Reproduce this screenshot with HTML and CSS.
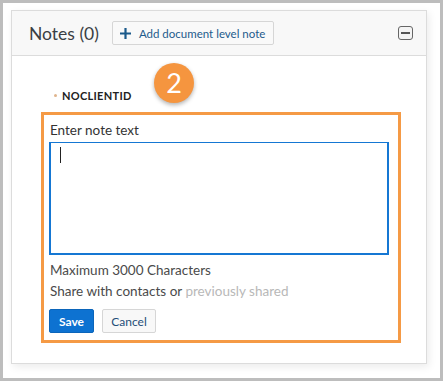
FILE: index.html
```
<!DOCTYPE html>
<html lang="en">
<head>
    <meta charset="UTF-8">
    <title>Notes</title>
    <link rel="stylesheet" href="styles.css">
</head>
<body>
    <div class="frame">
        <section class="notes">
            <header class="notes_header">
                <h2 class="notes_title">Notes (0)</h2>
                <button class="add_btn" type="button">
                    <svg width="11" height="11" viewBox="0 0 11 11"><path d="M5.5 0v11M0 5.5h11" stroke="#1b5a8b" stroke-width="2.2"/></svg>
                    <span>Add document level note</span>
                </button>
                <button class="collapse_btn" type="button" aria-label="collapse"></button>
            </header>

            <div class="notes_body">
                <ul class="clients">
                    <li>NOCLIENTID</li>
                </ul>
                <span class="step">2</span>

                <div class="note_form">
                    <label class="note_label">Enter note text</label>
                    <div class="note_text"><span class="caret"></span></div>
                    <p class="note_info">Maximum 3000 Characters</p>
                    <p class="note_info">Share with contacts or <span class="muted">previously shared</span></p>
                    <div class="note_actions">
                        <button class="btn btn_save" type="button">Save</button>
                        <button class="btn btn_cancel" type="button">Cancel</button>
                    </div>
                </div>
            </div>
        </section>
    </div>
</body>
</html>
```

FILE: styles.css
```
* {
    padding: 0;
    margin: 0;
    box-sizing: border-box;
    font-family: Lato, 'Open Sans', sans-serif;
}
ul {
    list-style-type: none;
}
body {
    background: #fff;
}
.frame {
    width: 443px;
    height: 381px;
    padding: 7px 13px 0 8px;
    border: 3px solid #bdbdbd;
}
.notes {
    height: 354px;
    border: 1px solid #dcdcdc;
    background: #fff;
    box-shadow: 2px 3px 8px rgba(0, 0, 0, 0.08);
}
.notes_header {
    display: flex;
    align-items: center;
    height: 45px;
    padding: 0 13px 0 17px;
    border-bottom: 1px solid #dcdcdc;
    background: #f8f8f8;
}
.notes_title {
    font-size: 17.5px;
    font-weight: normal;
    color: #3a3f44;
}
.add_btn {
    display: flex;
    align-items: center;
    gap: 8px;
    height: 24px;
    margin-left: 13px;
    padding: 0 8px 0 7px;
    border: 1px solid #d6d6d6;
    border-radius: 2px;
    background: #f9f9f9;
    font-size: 11.5px;
    color: #1d5b8c;
}
.add_btn span {
    color: #1d5b8c;
}
.collapse_btn {
    position: relative;
    width: 15px;
    height: 14px;
    margin-left: auto;
    border: 1px solid #666;
    border-radius: 3px;
    background: #f4f4f4;
}
.collapse_btn::after {
    content: '';
    position: absolute;
    left: 2px;
    right: 2px;
    top: 5px;
    height: 2px;
    background: #555;
}
.notes_body {
    position: relative;
    padding: 33px 25px 0 29px;
}
.clients li {
    display: flex;
    align-items: center;
    gap: 5px;
    padding-left: 13px;
    font-size: 11px;
    font-weight: bold;
    letter-spacing: 0.3px;
    color: #222;
}
.clients li::before {
    content: '';
    width: 3px;
    height: 3px;
    border-radius: 50%;
    background: #e0b48c;
}
.step {
    position: absolute;
    left: 142px;
    top: 7px;
    width: 40px;
    height: 40px;
    border-radius: 50%;
    background: #f5953f;
    box-shadow: 0 2px 4px rgba(0, 0, 0, 0.3);
    text-align: center;
    line-height: 40px;
    font-size: 27px;
    color: #fff;
}
.note_form {
    margin-top: 10px;
    height: 231px;
    padding: 4px 9px 0 5px;
    border: 3px solid #f59a45;
}
.note_label {
    display: block;
    margin-left: 1px;
    font-size: 13.5px;
    line-height: 22px;
    color: #333;
}
.note_text {
    height: 113px;
    margin-top: 1px;
    padding: 4px 9px;
    border: 2px solid #1577d3;
    border-top-width: 1px;
}
.caret {
    display: block;
    width: 1px;
    height: 16px;
    background: #222;
}
.note_info {
    margin-left: 1px;
    font-size: 13.5px;
    line-height: 21px;
    color: #4a4a4a;
}
.note_info:first-of-type {
    margin-top: 5px;
}
.muted {
    color: #b8b8b8;
}
.note_actions {
    display: flex;
    gap: 8px;
    margin-top: 7px;
}
.btn {
    height: 24px;
    border-radius: 2px;
    font-size: 12px;
}
.btn_save {
    width: 45px;
    border: 1px solid #0b65ba;
    background: #0d72d1;
    font-weight: bold;
    color: #fff;
}
.btn_cancel {
    width: 54px;
    border: 1px solid #d6d6d6;
    background: #f8f8f8;
    color: #1f4e79;
}
```
